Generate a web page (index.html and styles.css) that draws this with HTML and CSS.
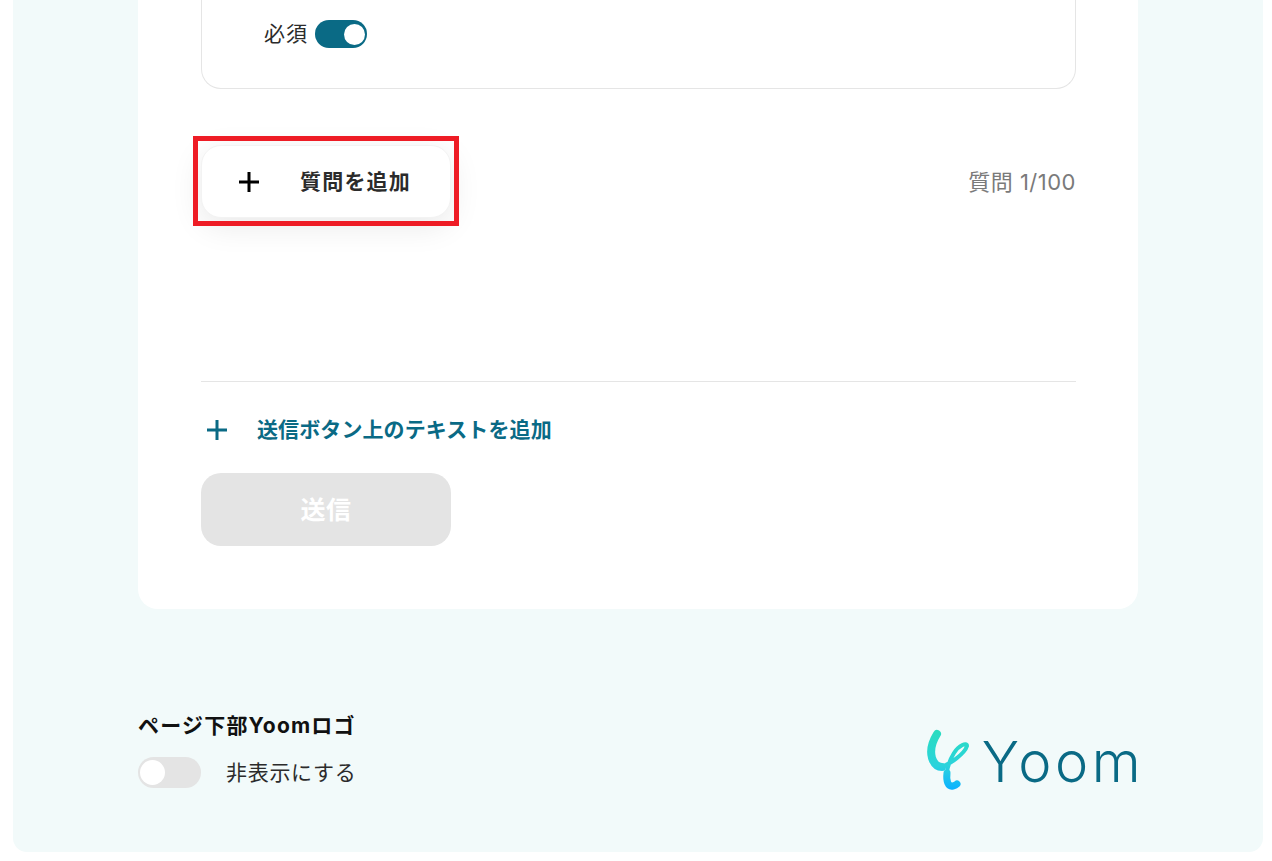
FILE: index.html
```html
<!DOCTYPE html>
<html lang="ja">
<head>
  <meta charset="UTF-8" />
  <title>フォーム編集</title>
  <link rel="stylesheet" href="styles.css">
</head>
<body>
  <div class="panel">
    <div class="card">
      <!-- question box, scrolled past the top of the window -->
      <div class="question-box">
        <span class="toggle-label">必須</span>
        <span class="toggle toggle-on"><span class="knob"></span></span>
      </div>

      <div class="add-row">
        <div class="add-wrap">
          <button class="add-btn" type="button">
            <svg class="plus" viewBox="0 0 20 20"><path d="M10 0V20M0 10H20" /></svg>
            <span class="lift">質問を追加</span>
          </button>
          <!-- annotation frame on top of the button -->
          <span class="highlight"></span>
        </div>
        <span class="count lift">質問 1/100</span>
      </div>

      <hr class="divider" />

      <div class="text-link">
        <svg class="plus plus-teal" viewBox="0 0 20 20"><path d="M10 0V20M0 10H20" /></svg>
        <span class="lift">送信ボタン上のテキストを追加</span>
      </div>

      <button class="submit" type="button"><span class="lift">送信</span></button>
    </div>

    <div class="footer">
      <div>
        <div class="footer-title">ページ下部Yoomロゴ</div>
        <div class="footer-toggle">
          <span class="toggle toggle-off"><span class="knob"></span></span>
          <span class="toggle-text lift">非表示にする</span>
        </div>
      </div>
      <div class="logo">
        <svg class="logo-mark" viewBox="0 0 44 64">
          <defs>
            <linearGradient id="markFill" gradientUnits="userSpaceOnUse" x1="0" y1="4" x2="0" y2="62">
              <stop offset="0" stop-color="#2adcc0" />
              <stop offset="0.6" stop-color="#2bd3dc" />
              <stop offset="1" stop-color="#0cb2ff" />
            </linearGradient>
          </defs>
          <path class="mark-loop" d="M14 40C24 38 39 26 41 19C41 15 33 18 28 26C23 34 21 42 21 48" />
          <path class="mark-thick" d="M11 7C6 15 4 24 6 31C8 37 11 40 16 40" />
          <path class="mark-tail" d="M21 46C20 54 22 60 27 59C29 58.500 30 58 31 57" />
        </svg>
        <span class="logo-word">Yoom</span>
      </div>
    </div>
  </div>
</body>
</html>
```

FILE: styles.css
```css
html, body {
  height: 861px;
  overflow: hidden;
}
body {
  margin: 0;
  background: #fff;
  color: #2b2b2b;
  font-family: 'Inter', 'Noto Sans CJK JP', sans-serif;
  font-size: 21px;
  letter-spacing: 0.5px;
}
.panel {
  box-sizing: border-box;
  width: 1250px;
  height: 852px;
  margin-left: 13px;
  padding: 0 125px;
  background: #f2fafa;
  border-radius: 0 0 14px 14px;
}
.card {
  box-sizing: border-box;
  height: 609px;
  padding: 0 62px 0 63px;
  background: #fff;
  border-radius: 0 0 20px 20px;
}
.question-box {
  box-sizing: border-box;
  display: flex;
  align-items: flex-start;
  gap: 7px;
  height: 89px;
  padding: 20px 0 0 62px;
  border: 1px solid #e5e5e5;
  border-top: none;
  border-radius: 0 0 20px 20px;
}
.toggle-label {
  letter-spacing: 1px;
  line-height: 28px;
}
.lift {
  margin-bottom: 4px;
}
.toggle {
  box-sizing: border-box;
  display: flex;
  align-items: center;
  border-radius: 16px;
}
.knob {
  display: block;
  background: #fff;
  border-radius: 50%;
}
.toggle-on {
  justify-content: flex-end;
  width: 52px;
  height: 28px;
  padding-right: 2px;
  background: #0a6a85;
}
.toggle-on .knob {
  width: 21px;
  height: 21px;
}
.toggle-off {
  width: 63px;
  height: 31px;
  padding-left: 2px;
  background: #e4e4e4;
}
.toggle-off .knob {
  width: 25px;
  height: 25px;
}
.add-row {
  display: flex;
  justify-content: space-between;
  align-items: center;
  margin-top: 56px;
}
.add-wrap {
  position: relative;
}
.add-btn {
  box-sizing: border-box;
  display: flex;
  align-items: center;
  gap: 41px;
  width: 250px;
  height: 73px;
  padding: 0 0 0 37px;
  border: 1px solid #f3f3f3;
  border-radius: 20px;
  background: #fff;
  box-shadow: 0 8px 32px rgba(0, 0, 0, 0.09);
  color: #2b2b2b;
  font: inherit;
  font-weight: 700;
  letter-spacing: 1.2px;
}
.highlight {
  position: absolute;
  inset: -9px -8px -8px -8px;
  border: 5px solid #ee1c25;
}
.plus {
  display: block;
  flex: none;
  width: 20px;
  height: 20px;
  fill: none;
  stroke: #000;
  stroke-width: 3;
}
.plus-teal {
  stroke: #0a6a85;
}
.count {
  color: #7a7a7a;
  font-size: 22px;
}
.divider {
  height: 1px;
  margin: 163px 0 0;
  border: none;
  background: #e5e5e5;
}
.text-link {
  display: flex;
  align-items: center;
  gap: 30px;
  height: 30px;
  margin: 33px 0 0 6px;
  color: #0a6a85;
  font-weight: 700;
  letter-spacing: 0.1px;
}
.submit {
  display: flex;
  justify-content: center;
  align-items: center;
  width: 250px;
  height: 73px;
  margin-top: 28px;
  border: none;
  border-radius: 20px;
  background: #e4e4e4;
  color: #fff;
  font: inherit;
  font-size: 25px;
  font-weight: 700;
  letter-spacing: 0.5px;
}
.footer {
  display: flex;
  justify-content: space-between;
  align-items: flex-end;
  margin-top: 101px;
}
.footer-title {
  color: #111;
  font-weight: 700;
  letter-spacing: 1.2px;
  line-height: 32px;
}
.footer-toggle {
  display: flex;
  align-items: center;
  gap: 25px;
  height: 31px;
  margin-top: 15px;
  letter-spacing: 0.7px;
}
.logo {
  display: flex;
  align-items: flex-start;
  gap: 12px;
  height: 66px;
}
.logo-mark {
  display: block;
  width: 44px;
  height: 64px;
  margin-top: 5px;
  fill: none;
  stroke: url(#markFill);
  stroke-linecap: round;
}
.mark-loop {
  stroke-width: 4;
}
.mark-thick {
  stroke-width: 8;
}
.mark-tail {
  stroke-width: 7;
}
.logo-word {
  margin: 7px -6px 0 0;
  color: #0a6a85;
  font-family: 'Inter', sans-serif;
  font-size: 56px;
  font-weight: 350;
  letter-spacing: 3.5px;
  line-height: 66px;
}
```
